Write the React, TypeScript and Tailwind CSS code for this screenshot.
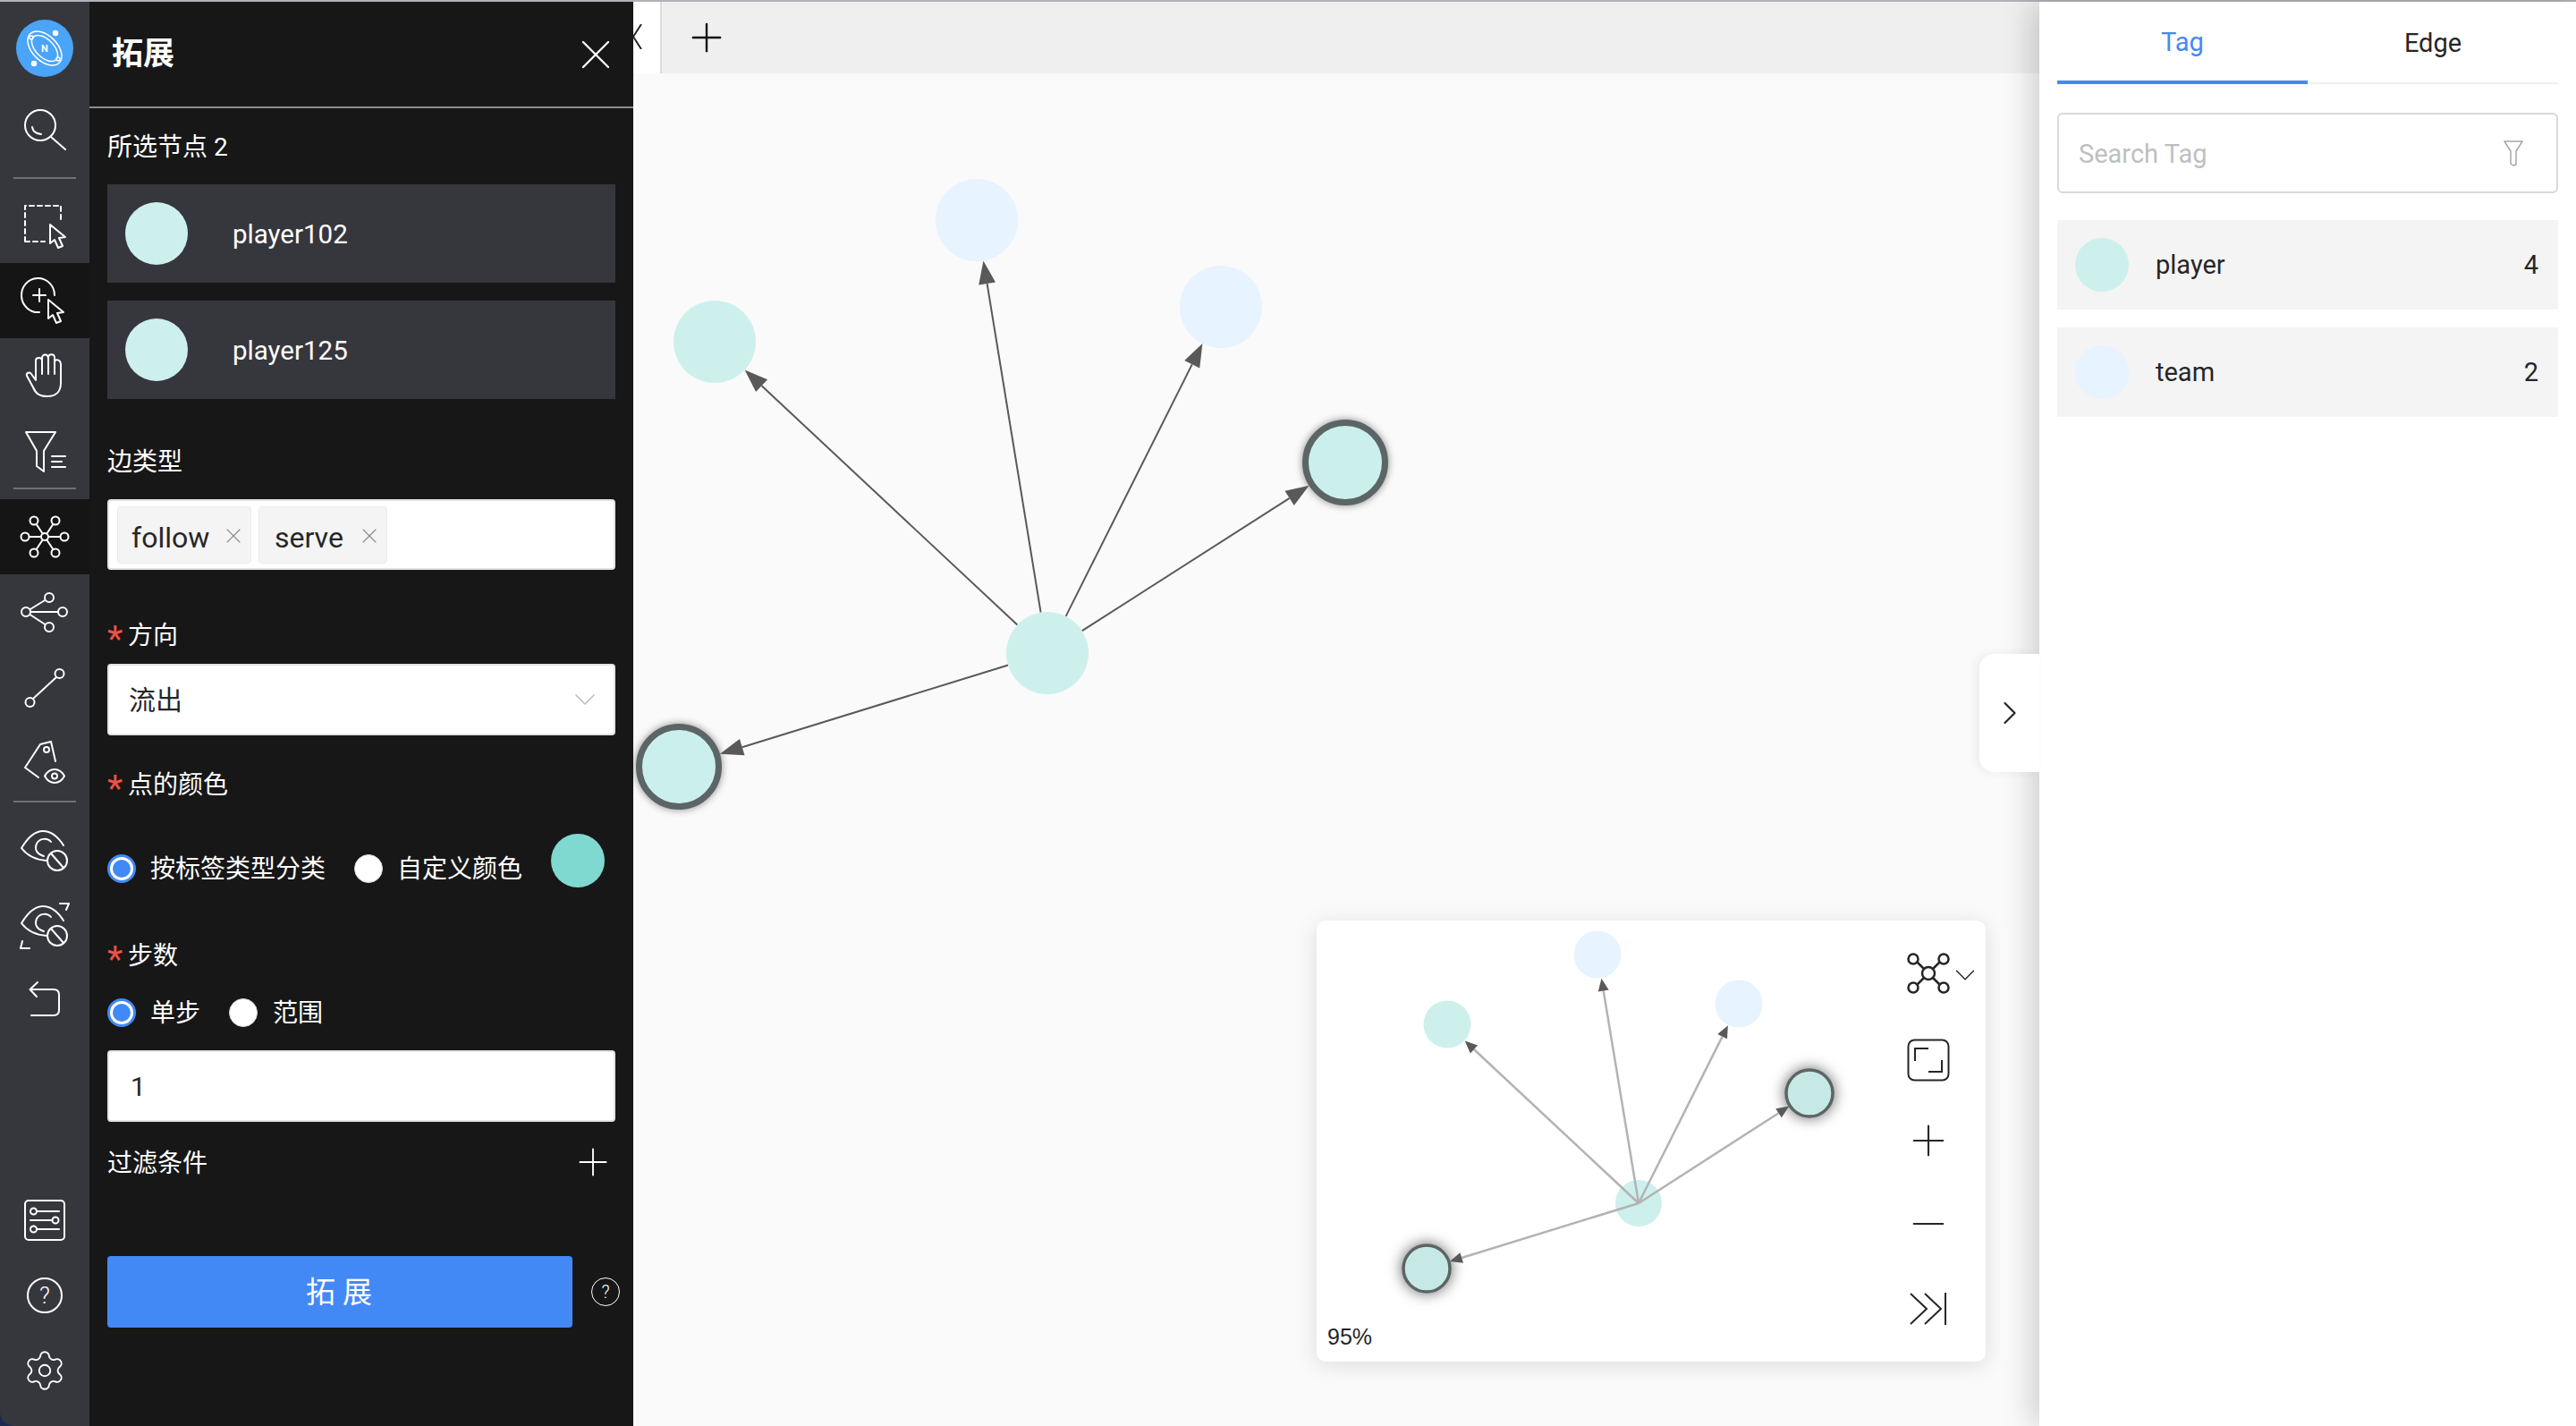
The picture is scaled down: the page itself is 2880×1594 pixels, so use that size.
import { ReactNode } from 'react';
import { Settings, X, Plus, ChevronDown, ChevronRight, Minus } from 'lucide-react';

type Pt = { x: number; y: number };

// graph coordinates are relative to the canvas (left 708, top 2)
const center: Pt = { x: 463, y: 728 };
const graphNodes = [
    { x: 384, y: 244, fill: '#e7f3fe' },
    { x: 657, y: 341, fill: '#e7f3fe' },
    { x: 91, y: 380, fill: '#cdf0ed' },
    { x: 796, y: 515, fill: '#cdf0ed', selected: true },
    { x: 51, y: 855, fill: '#cdf0ed', selected: true },
];

// minimap coordinates are relative to the minimap box
const miniCenter: Pt = { x: 360, y: 316 };
const miniNodes = [
    { x: 314, y: 38, fill: '#e7f3fe' },
    { x: 472, y: 93, fill: '#e7f3fe' },
    { x: 146, y: 116, fill: '#cdf0ed' },
    { x: 551, y: 193, fill: '#c6e9e6', selected: true },
    { x: 123, y: 389, fill: '#c6e9e6', selected: true },
];

function arrowHead(from: Pt, to: Pt, r: number, len: number, wid: number) {
    const d = Math.hypot(to.x - from.x, to.y - from.y);
    const ux = (to.x - from.x) / d;
    const uy = (to.y - from.y) / d;
    const tipX = to.x - ux * r;
    const tipY = to.y - uy * r;
    const baseX = tipX - ux * len;
    const baseY = tipY - uy * len;
    const points = [
        `${tipX},${tipY}`,
        `${baseX - (uy * wid) / 2},${baseY + (ux * wid) / 2}`,
        `${baseX + (uy * wid) / 2},${baseY - (ux * wid) / 2}`,
    ].join(' ');
    return { points, baseX, baseY, ux, uy };
}

function Ic({ children }: { children: ReactNode }) {
    return (
        <svg width="60" height="60" viewBox="0 0 60 60" fill="none" stroke="white" strokeWidth="2" strokeLinecap="round" strokeLinejoin="round">
            {children}
        </svg>
    );
}

function NavItem({ children, active }: { children: ReactNode; active?: boolean }) {
    return <div className={`h-[84px] w-full flex items-center justify-center shrink-0 ${active ? 'bg-[#151516]' : ''}`}>{children}</div>;
}

const Divider = ({ className }: { className: string }) => <div className={`h-[2px] mx-[16px] w-[70px] bg-[#6f7076] shrink-0 ${className}`} />;

const EyeShape = () => (
    <>
        <path d="M51 24C44 13 36 8 28 8C18 8 10 17 4 27C10 35 20 40 32 41" />
        <path d="M37 20C33 15 24 16 21 22C18 29 22 34 29 36" />
        <circle cx="44" cy="41" r="11" />
        <path d="M37 33L51 49" />
    </>
);

function Sidebar() {
    return (
        <div className="w-[100px] h-full bg-[#36373d] rounded-bl-[16px] flex flex-col items-center shrink-0">
            <div className="mt-[20px] h-[64px] w-[64px] rounded-full bg-[#4aa4f7] flex items-center justify-center relative shrink-0">
                <svg width="50" height="50" viewBox="0 0 50 50" fill="none" stroke="white" strokeWidth="1.5" className="absolute">
                    <ellipse cx="25" cy="25" rx="23" ry="14" transform="rotate(45 25 25)" />
                    <ellipse cx="25" cy="25" rx="18" ry="10" transform="rotate(45 25 25)" />
                    <circle cx="37" cy="8" r="2.5" fill="white" />
                    <circle cx="13" cy="42" r="2.5" fill="white" />
                    <circle cx="10" cy="13" r="2" />
                    <circle cx="40" cy="37" r="2" />
                </svg>
                <span className="text-white text-[11px] font-bold leading-none">N</span>
            </div>
            <div className="mt-[17px] shrink-0">
                <NavItem>
                    <Ic>
                        <circle cx="25" cy="25" r="17" />
                        <path d="M37 38L53 52" />
                        <path d="M16 27Q17 34 26 35" />
                    </Ic>
                </NavItem>
            </div>
            <Divider className="mt-[11px] mb-[10px]" />
            <NavItem>
                <Ic>
                    <path d="M8 48V8H48V26M8 48H30" strokeDasharray="5 4" />
                    <path d="M36 29V50L41 46L45 55L50 53L46 44L53 43Z" />
                </Ic>
            </NavItem>
            <NavItem active>
                <Ic>
                    <path d="M41 24A18.5 19 0 1 0 24 43" />
                    <path d="M24 17V31M17 24H31" />
                    <path d="M34 29V50L39 46L43 55L48 53L44 44L51 43Z" />
                </Ic>
            </NavItem>
            <NavItem>
                <Ic>
                    <path d="M48 18V38C48 48 42 53 33 53C24 53 20 50 17 43L10 30C9 27 13 25 15 28L20 35V13C20 9 27 9 27 13V28" />
                    <path d="M27 11C27 5 34 5 34 11V28" />
                    <path d="M34 10C34 5 41 5 41 10V28" />
                    <path d="M41 15C41 11 48 11 48 18" />
                </Ic>
            </NavItem>
            <NavItem>
                <Ic>
                    <path d="M9 9H42L29 30V53L21 47V30Z" />
                    <path d="M38 36H53M38 42H49M38 48H53" />
                </Ic>
            </NavItem>
            <Divider className="-mt-[1px] mb-[11px]" />
            <NavItem active>
                <Ic>
                    <path d="M30 30L18 12M30 30L42 12M30 30H8M30 30H52M30 30L18 48M30 30L42 48" />
                    <g fill="#151516">
                        <circle cx="18" cy="12" r="4.5" />
                        <circle cx="42" cy="12" r="4.5" />
                        <circle cx="8" cy="30" r="4.5" />
                        <circle cx="52" cy="30" r="4.5" />
                        <circle cx="18" cy="48" r="4.5" />
                        <circle cx="42" cy="48" r="4.5" />
                        <circle cx="30" cy="30" r="4" />
                    </g>
                </Ic>
            </NavItem>
            <NavItem>
                <Ic>
                    <path d="M9 30L35 14M9 30H50M9 30L35 47" />
                    <g fill="#36373d">
                        <circle cx="9" cy="30" r="5" />
                        <circle cx="35" cy="14" r="5" />
                        <circle cx="50" cy="30" r="5" />
                        <circle cx="35" cy="47" r="5" />
                    </g>
                </Ic>
            </NavItem>
            <NavItem>
                <Ic>
                    <path d="M43 19L17 43" />
                    <circle cx="46.5" cy="15" r="5" />
                    <circle cx="13.5" cy="47" r="5" />
                </Ic>
            </NavItem>
            <NavItem>
                <Ic>
                    <path d="M42 29L37 7L25 10L8 36L23 47" />
                    <circle cx="32" cy="16" r="3" />
                    <path d="M30 45.5C33 40 37 38 41 38C45 38 49 40 52 45.5C49 51 45 53 41 53C37 53 33 51 30 45.5Z" />
                    <circle cx="41" cy="45.5" r="3" />
                </Ic>
            </NavItem>
            <Divider className="mt-[1px] mb-[12px]" />
            <NavItem>
                <Ic>
                    <EyeShape />
                </Ic>
            </NavItem>
            <NavItem>
                <Ic>
                    <EyeShape />
                    <path d="M47 5H57L54 12M5 47L3 55H13" />
                </Ic>
            </NavItem>
            <NavItem>
                <Ic>
                    <path d="M22 9L13.5 17L21 25M13.5 17H40Q46 17 46 23V40Q46 46 40 46H15" />
                </Ic>
            </NavItem>
            <div className="flex-1" />
            <NavItem>
                <Ic>
                    <rect x="8" y="8" width="44" height="44" rx="4" />
                    <path d="M22 20H46M14 30H38M22 40H46" />
                    <circle cx="17.5" cy="20" r="3.5" />
                    <circle cx="42" cy="30" r="3.5" />
                    <circle cx="17.5" cy="40" r="3.5" />
                </Ic>
            </NavItem>
            <NavItem>
                <div className="w-[40px] h-[40px] rounded-full border-2 border-white text-white text-[26px] font-light flex items-center justify-center">?</div>
            </NavItem>
            <NavItem>
                <Settings size={50} color="white" strokeWidth={0.9} />
            </NavItem>
            <div className="h-[20px] shrink-0" />
        </div>
    );
}

function SelectedNode({ name }: { name: string }) {
    return (
        <div className="h-[110px] bg-[#36373d] flex items-center pl-[20px]">
            <div className="w-[70px] h-[70px] rounded-full bg-[#cdf0ed]" />
            <span className="ml-[50px] text-[29.5px] text-white pt-[3px]">{name}</span>
        </div>
    );
}

function TagChip({ label, width, pad }: { label: string; width: string; pad: string }) {
    return (
        <div className={`h-[64px] ${width} ${pad} bg-[#f4f4f4] border border-[#ebebeb] rounded-[4px] flex items-center justify-between pr-[5px] text-[32px] text-[#262626]`}>
            <span className="pt-[7px]">{label}</span>
            <X size={28} color="#8c8c8c" strokeWidth={1} className="mt-[2px]" />
        </div>
    );
}

const Required = ({ label, className = '' }: { label: string; className?: string }) => (
    <div className={`h-[40px] flex items-center text-[28px] text-white leading-none ${className}`}>
        <span className="text-[#ef5145] w-[23px] text-[40px] pt-[8px]">*</span>
        {label}
    </div>
);

function Radio({ checked }: { checked?: boolean }) {
    return (
        <div className={`w-[32px] h-[32px] rounded-full bg-white flex items-center justify-center shrink-0 ${checked ? 'border-[3px] border-[#4389f6]' : 'border border-[#d9d9d9]'}`}>
            {checked && <div className="w-[20px] h-[20px] rounded-full bg-[#4389f6]" />}
        </div>
    );
}

function ExpandPanel() {
    return (
        <div className="w-[608px] h-full bg-[#171718] flex flex-col shrink-0 z-20 text-white">
            <div className="h-[119px] border-b-2 border-[#8b8b8c] flex items-center justify-between pl-[25px] pr-[14px] shrink-0">
                <span className="text-[35px] font-bold pt-[2px]">拓展</span>
                <X size={56} color="white" strokeWidth={1} />
            </div>
            <div className="px-[20px] flex flex-col">
                <div className="mt-[23px] h-[40px] flex items-center text-[28px] pt-[2px]">所选节点 2</div>
                <div className="mt-[22px] flex flex-col gap-[20px]">
                    <SelectedNode name="player102" />
                    <SelectedNode name="player125" />
                </div>
                <div className="mt-[50px] h-[40px] flex items-center text-[28px] pt-[2px]">边类型</div>
                <div className="mt-[22px] h-[79px] bg-white border-2 border-[#e3e3e3] rounded-[4px] flex items-center pl-[9px] gap-[8px]">
                    <TagChip label="follow" width="w-[150px]" pad="pl-[15px]" />
                    <TagChip label="serve" width="w-[144px]" pad="pl-[17px]" />
                </div>
                <div className="mt-[54px]">
                    <Required label="方向" />
                </div>
                <div className="mt-[11px] h-[80px] bg-white border-2 border-[#e3e3e3] rounded-[4px] flex items-center justify-between pl-[22px] pr-[12px] text-[30px] text-[#262626]">
                    <span>流出</span>
                    <ChevronDown size={40} color="#bfbfbf" strokeWidth={1} />
                </div>
                <div className="mt-[35px]">
                    <Required label="点的颜色" className="pt-[2px]" />
                </div>
                <div className="mt-[35px] h-[60px] flex items-start">
                    <div className="mt-[22px] flex items-center">
                        <Radio checked />
                        <span className="ml-[16px] text-[28px] leading-[32px] pt-[2px]">按标签类型分类</span>
                        <div className="w-[32px]" />
                        <Radio />
                        <span className="ml-[16px] text-[28px] leading-[32px] pt-[2px]">自定义颜色</span>
                    </div>
                    <div className="ml-[32px] w-[60px] h-[60px] rounded-full bg-[#7fd9d0] shrink-0" />
                </div>
                <div className="mt-[56px]">
                    <Required label="步数" className="pt-[2px]" />
                </div>
                <div className="mt-[24px] h-[40px] flex items-center">
                    <Radio checked />
                    <span className="ml-[16px] text-[28px] pt-[2px]">单步</span>
                    <div className="w-[32px]" />
                    <Radio />
                    <span className="ml-[17px] text-[28px] pt-[2px]">范围</span>
                </div>
                <div className="mt-[22px] h-[80px] bg-white border-2 border-[#e3e3e3] rounded-[4px] flex items-center pl-[24px] text-[30px] text-[#262626]">1</div>
                <div className="mt-[25px] h-[40px] flex items-center justify-between text-[28px]">
                    <span className="pt-[4px]">过滤条件</span>
                    <Plus size={50} color="white" strokeWidth={0.9} />
                </div>
                <div className="mt-[85px] flex items-center">
                    <div className="w-[520px] h-[80px] shrink-0 rounded-[4px] bg-[#4389f6] flex items-center justify-center text-[33px] tracking-[8px] pl-[6px] pt-[2px]">拓展</div>
                    <div className="ml-[21px] w-[32px] h-[32px] shrink-0 rounded-full border border-white text-[20px] font-light flex items-center justify-center">?</div>
                </div>
            </div>
        </div>
    );
}

function GraphCanvas() {
    return (
        <svg width="1600" height="1592" className="absolute left-0 top-0" fill="none">
            {graphNodes.map((n, i) => {
                const r = n.selected ? 48 : 46;
                const a = arrowHead(center, n, r, 26, 19);
                const startX = center.x + a.ux * 46;
                const startY = center.y + a.uy * 46;
                return <line key={i} x1={startX} y1={startY} x2={a.baseX} y2={a.baseY} stroke="#595959" strokeWidth="2" />;
            })}
            <circle cx={center.x} cy={center.y} r="46" fill="#cdf0ed" />
            {graphNodes.map((n, i) =>
                n.selected ? (
                    <circle key={i} cx={n.x} cy={n.y} r="44.5" fill="#cbefec" stroke="#5c6566" strokeWidth="7" className="[filter:drop-shadow(0_0_4px_rgba(0,0,0,0.45))]" />
                ) : (
                    <circle key={i} cx={n.x} cy={n.y} r="46" fill={n.fill} />
                )
            )}
            {graphNodes.map((n, i) => {
                const a = arrowHead(center, n, n.selected ? 48 : 46, 26, 19);
                return <polygon key={i} points={a.points} fill="#595959" />;
            })}
        </svg>
    );
}

function MiniMap() {
    return (
        <div className="absolute left-[764px] top-[1027px] w-[748px] h-[493px] bg-white rounded-[10px] shadow-[0_4px_24px_rgba(0,0,0,0.12)] z-10">
            <svg width="640" height="493" className="absolute left-0 top-0" fill="none">
                <circle cx={miniCenter.x} cy={miniCenter.y} r="26" fill="#cdf0ed" />
                {miniNodes.map((n, i) =>
                    n.selected ? (
                        <circle key={i} cx={n.x} cy={n.y} r="26" fill={n.fill} stroke="#5c6566" strokeWidth="3.5" className="[filter:drop-shadow(0_0_8px_rgba(0,0,0,0.6))]" />
                    ) : (
                        <circle key={i} cx={n.x} cy={n.y} r="26.5" fill={n.fill} />
                    )
                )}
                {miniNodes.map((n, i) => {
                    const a = arrowHead(miniCenter, n, 27, 14, 12);
                    return (
                        <g key={i}>
                            <line x1={miniCenter.x} y1={miniCenter.y} x2={a.baseX} y2={a.baseY} stroke="#b3b3b3" strokeWidth="2.5" />
                            <polygon points={a.points} fill="#595959" />
                        </g>
                    );
                })}
            </svg>
            <span className="absolute left-[12px] bottom-[15px] text-[25px] leading-none text-[#262626] font-[Liberation_Sans,sans-serif]">95%</span>
            <div className="absolute left-[654px] top-[34px] w-[60px] flex flex-col items-center">
                <div className="relative">
                    <svg width="50" height="50" viewBox="0 0 50 50" fill="none" stroke="#262626" strokeWidth="2.5">
                        <path d="M25 25L9 9M25 25L41 9M25 25L9 41M25 25L41 41" />
                        <g fill="white">
                            <circle cx="8" cy="9" r="5.5" />
                            <circle cx="42" cy="9" r="5.5" />
                            <circle cx="8" cy="41" r="5.5" />
                            <circle cx="42" cy="41" r="5.5" />
                            <circle cx="25" cy="25" r="7" />
                        </g>
                    </svg>
                    <ChevronDown size={38} color="#262626" strokeWidth={0.9} className="absolute left-[47px] top-[8px]" />
                </div>
                <svg width="48" height="48" viewBox="0 0 48 48" fill="none" stroke="#262626" strokeWidth="2" className="mt-[48px]">
                    <rect x="1.5" y="1.5" width="45" height="45" rx="7" />
                    <path d="M9 25V11H24M39 24V37H24" />
                </svg>
                <Plus size={56} color="#262626" strokeWidth={0.9} className="mt-[38px]" />
                <Minus size={56} color="#262626" strokeWidth={0.9} className="mt-[37px]" />
                <svg width="44" height="36" viewBox="0 0 44 36" fill="none" stroke="#262626" strokeWidth="2" className="mt-[49px]">
                    <path d="M2 1L20 18L2 35M18 1L36 18L18 35M41 0V36" />
                </svg>
            </div>
        </div>
    );
}

function TagPanel() {
    return (
        <div className="w-[600px] h-full bg-white shrink-0 px-[20px] shadow-[-8px_0_32px_rgba(0,0,0,0.18)] z-10 flex flex-col">
            <div className="h-[92px] flex border-b-2 border-[#f0f0f0] shrink-0">
                <div className="w-[280px] h-[92px] border-b-4 border-[#4389f6] flex items-center justify-center text-[29px] text-[#4389f6] pt-[3px]">Tag</div>
                <div className="w-[280px] flex items-center justify-center text-[29px] text-[#262626] pt-[3px]">Edge</div>
            </div>
            <div className="mt-[32px] h-[90px] border-2 border-[#d9d9d9] rounded-[6px] flex items-center justify-between pl-[22px] pr-[36px] shrink-0">
                <input placeholder="Search Tag" className="text-[29px] outline-none bg-transparent placeholder:text-[#bfbfbf] w-[300px] pt-[4px]" />
                <svg width="24" height="30" viewBox="0 0 24 30" fill="none" stroke="#a6a6a6" strokeWidth="1.5" strokeLinejoin="round">
                    <path d="M2 2H22L15 13V28L12 29L9 27V13Z" />
                </svg>
            </div>
            <div className="mt-[30px] flex flex-col gap-[20px]">
                {[
                    { name: 'player', count: 4, color: 'bg-[#cdf0ed]' },
                    { name: 'team', count: 2, color: 'bg-[#e7f3fe]' },
                ].map(t => (
                    <div key={t.name} className="h-[100px] bg-[#f4f4f4] flex items-center pl-[20px] pr-[22px] text-[29px] text-[#262626]">
                        <div className={`w-[60px] h-[60px] rounded-full ${t.color}`} />
                        <span className="ml-[30px] flex-1 pt-[2px]">{t.name}</span>
                        <span className="pt-[2px]">{t.count}</span>
                    </div>
                ))}
            </div>
        </div>
    );
}

export default function App() {
    return (
        <div className="w-[2880px] h-[1594px] bg-[#1d2a4d] flex flex-col overflow-hidden font-[Roboto,'Noto_Sans_CJK_SC',sans-serif]">
            <div className="h-[2px] bg-[#b1b1b9] shrink-0" />
            <div className="flex-1 flex min-h-0">
                <Sidebar />
                <ExpandPanel />
                <main className="flex-1 relative bg-[#fafafa] min-w-0">
                    <div className="h-[80px] bg-[#efefef] flex relative z-[1]">
                        <div className="w-[32px] h-full bg-white border-r-2 border-[#dcdcdc] flex items-center">
                            <svg width="10" height="28" viewBox="0 0 10 28" fill="none" stroke="#262626" strokeWidth="2" className="-mt-[2px]">
                                <path d="M9 0L0 14L9 28" />
                            </svg>
                        </div>
                        <Plus size={52} color="#111" strokeWidth={1.1} className="ml-[24px] mt-[14px]" />
                    </div>
                    <GraphCanvas />
                    <MiniMap />
                    <div className="absolute right-0 top-[729px] w-[67px] h-[132px] bg-white rounded-l-[16px] flex items-center justify-center z-20 shadow-[-4px_0_12px_rgba(0,0,0,0.06)]">
                        <ChevronRight size={44} color="#262626" strokeWidth={1.2} />
                    </div>
                </main>
                <TagPanel />
            </div>
        </div>
    );
}
